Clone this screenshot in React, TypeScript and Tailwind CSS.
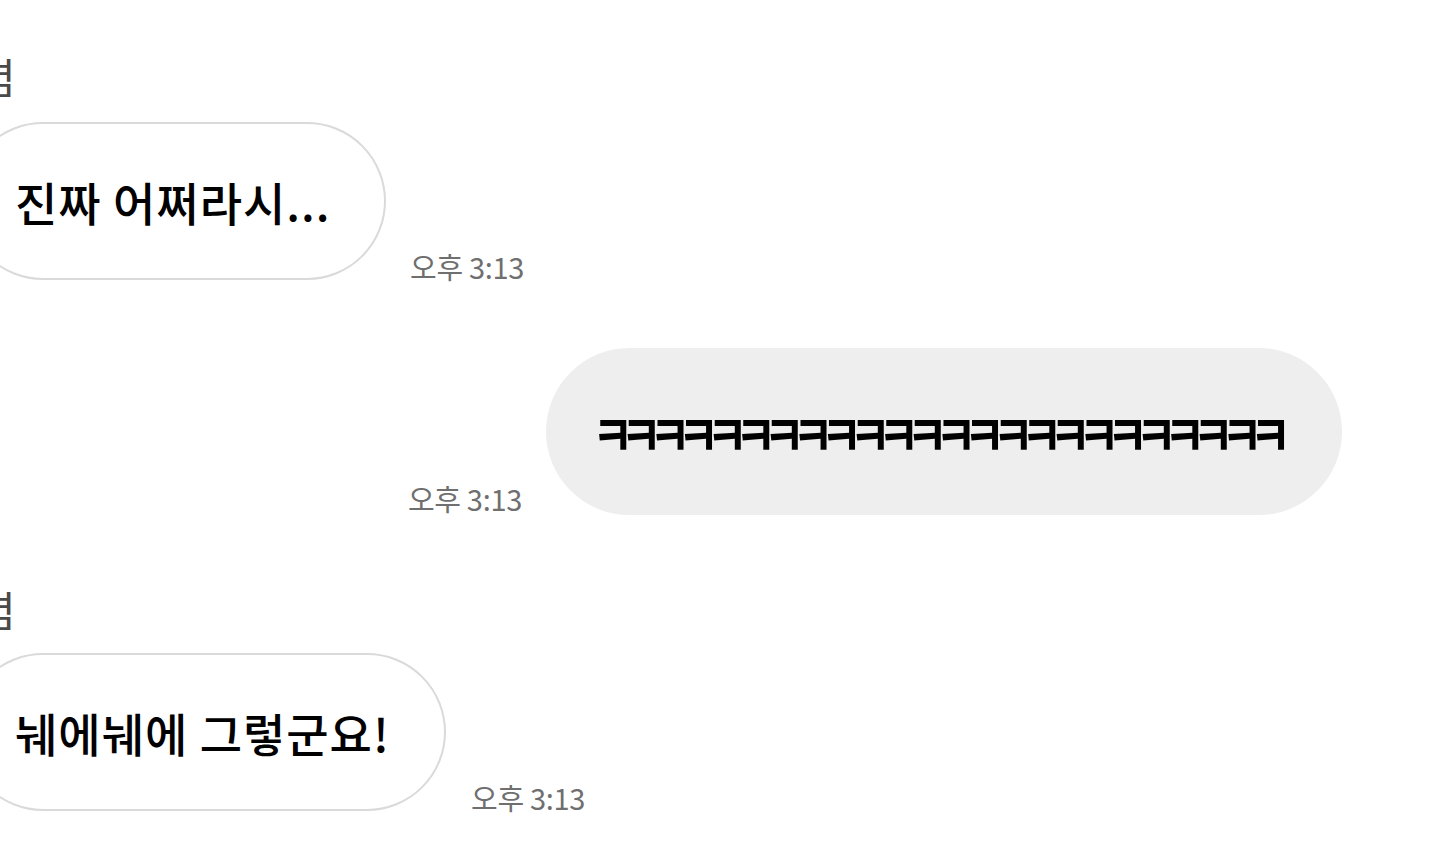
import React from "react";

const font = { fontFamily: '"Noto Sans CJK KR", "Noto Sans", sans-serif' };

function Time({ children }: { children: React.ReactNode }) {
  return (
    <div className="text-[29px] leading-[32px] text-[#6f6f6f] whitespace-nowrap tracking-[-0.3px]">
      {children}
    </div>
  );
}

export default function App() {
  return (
    <div
      className="w-[1440px] h-[855px] bg-white overflow-hidden flex flex-col"
      style={font}
    >
      {/* name 1 */}
      <div className="mt-[52px] h-[48px] overflow-hidden">
        <div className="ml-[-23px] text-[42px] leading-[48px] text-[#4a4a4a]">렴</div>
      </div>

      {/* bubble 1 */}
      <div className="mt-[22px] flex items-end gap-[24px]">
        <div className="ml-[-36px] w-[422px] h-[158px] shrink-0 rounded-full border-2 border-[#dadada] bg-white flex items-center pl-[49px]">
          <span className="text-[46px] leading-none text-black font-medium whitespace-nowrap tracking-[1px]">
            진짜 어쩌라시...
          </span>
        </div>
        <div className="mb-[-2px]">
          <Time>오후 3:13</Time>
        </div>
      </div>

      {/* bubble 2 (mine) */}
      <div className="mt-[68px] flex items-end justify-end gap-[24px] pr-[98px]">
        <div className="mb-[1px]">
          <Time>오후 3:13</Time>
        </div>
        <div className="w-[796px] h-[167px] shrink-0 rounded-full bg-[#eeeeee] flex items-center pl-[46px]">
          <span className="inline-block text-[45px] leading-none text-black font-bold whitespace-nowrap tracking-[-12.8px] scale-y-125 origin-center">
            ㅋㅋㅋㅋㅋㅋㅋㅋㅋㅋㅋㅋㅋㅋㅋㅋㅋㅋㅋㅋㅋㅋㅋㅋ
          </span>
        </div>
      </div>

      {/* name 2 */}
      <div className="mt-[70px] h-[48px] overflow-hidden">
        <div className="ml-[-23px] text-[42px] leading-[48px] text-[#4a4a4a]">렴</div>
      </div>

      {/* bubble 3 */}
      <div className="mt-[20px] flex items-end gap-[25px]">
        <div className="ml-[-36px] w-[482px] h-[158px] shrink-0 rounded-full border-2 border-[#dadada] bg-white flex items-center pl-[49px]">
          <span className="text-[46px] leading-none text-black font-medium whitespace-nowrap tracking-[1px]">
            눼에눼에 그렇군요!
          </span>
        </div>
        <div className="mb-[-2px]">
          <Time>오후 3:13</Time>
        </div>
      </div>
    </div>
  );
}
